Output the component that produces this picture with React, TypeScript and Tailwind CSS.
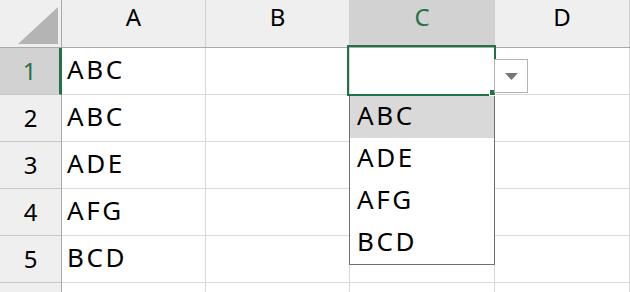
import React from 'react';

const cols = ['A', 'B', 'C', 'D'];
const colWidths = ['w-[144px]', 'w-[144px]', 'w-[145px]', 'flex-1'];
const cellValues: Record<number, string> = { 1: 'ABC', 2: 'ABC', 3: 'ADE', 4: 'AFG', 5: 'BCD' };
const options = ['ABC', 'ADE', 'AFG', 'BCD'];

const font = { fontFamily: '"Noto Sans", "Noto Sans CJK JP", sans-serif' };

export default function App() {
    return (
        <div className="relative w-[630px] h-[292px] overflow-hidden bg-white text-black" style={font}>
            {/* 列ヘッダー */}
            <div className="flex h-[48px] bg-[#efefef] border-b border-[#a9a9a9]">
                <div className="relative w-[62px] shrink-0 border-r border-[#a9a9a9]">
                    <svg className="absolute left-[18px] top-[7px]" width="40" height="37" viewBox="0 0 40 37">
                        <polygon points="40,0 40,37 0,37" fill="#b4b4b4" />
                    </svg>
                </div>
                {cols.map((c, i) => (
                    <div
                        key={c}
                        className={`${colWidths[i]} shrink-0 flex items-center justify-center pb-[13px] text-[24px] border-r border-[#d0d0d0] ${c === 'C' ? 'bg-[#d2d2d2] text-[#217346]' : ''}`}
                    >
                        {c}
                    </div>
                ))}
            </div>

            {/* 行 */}
            {[1, 2, 3, 4, 5, 6].map((r) => (
                <div key={r} className="flex h-[47px]">
                    <div
                        className={`w-[62px] shrink-0 flex items-center justify-center text-[24px] border-b border-[#c8c8c8] ${r === 1 ? 'bg-[#d2d2d2] text-[#217346] border-r-[3px] border-r-[#217346]' : 'bg-[#efefef] border-r border-r-[#a9a9a9]'}`}
                    >
                        {r < 6 ? r : ''}
                    </div>
                    {cols.map((c, i) => (
                        <div
                            key={c}
                            className={`${colWidths[i]} shrink-0 flex items-center pl-[5px] pb-[4px] text-[26px] tracking-[0.1em] border-r border-b border-[#dadada]`}
                        >
                            {c === 'A' ? cellValues[r] : ''}
                        </div>
                    ))}
                </div>
            ))}

            {/* ドロップダウン一覧 */}
            <div className="absolute left-[349px] top-[95px] w-[146px] h-[170px] bg-white border border-[#6f6f6f]">
                {options.map((o, i) => (
                    <div
                        key={o}
                        className={`h-[42px] flex items-center pl-[7px] pb-[4px] text-[26px] tracking-[0.1em] ${i === 0 ? 'bg-[#d9d9d9]' : ''}`}
                    >
                        {o}
                    </div>
                ))}
            </div>

            {/* 選択セル */}
            <div className="absolute left-[347px] top-[45px] w-[149px] h-[51px] border-2 border-[#217346]" />
            <div className="absolute left-[489px] top-[89px] w-[7px] h-[7px] bg-[#217346] border border-white" />

            {/* ドロップダウンボタン */}
            <div className="absolute left-[494px] top-[59px] w-[34px] h-[34px] bg-white border border-[#b3b3b3] flex items-center justify-center">
                <svg width="13" height="7" viewBox="0 0 13 7">
                    <polygon points="0,0 13,0 6.5,7" fill="#777777" />
                </svg>
            </div>
        </div>
    );
}
